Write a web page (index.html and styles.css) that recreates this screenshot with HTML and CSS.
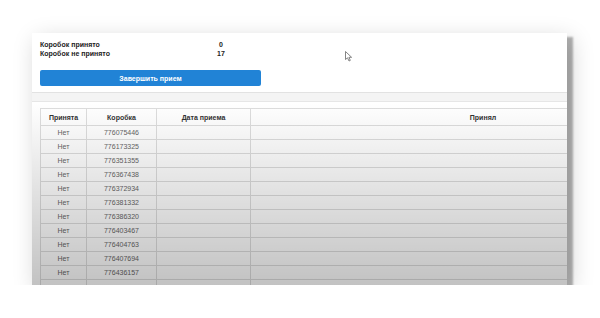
FILE: index.html
```html
<!DOCTYPE html>
<html lang="ru">
<head>
  <meta charset="UTF-8">
  <meta name="viewport" content="width=device-width, initial-scale=1.0">
  <title>Приемка коробок</title>
  <link rel="stylesheet" href="styles.css">
</head>
<body>
  <div class="window">
    <div class="card summary">
      <div class="stat">
        <span class="stat-label">Коробок принято</span>
        <span class="stat-value">0</span>
      </div>
      <div class="stat">
        <span class="stat-label">Коробок не принято</span>
        <span class="stat-value">17</span>
      </div>
      <button class="primary-button">Завершить прием</button>
    </div>
    <div class="card list">
      <table class="boxes">
        <thead>
          <tr>
            <th class="col-accepted">Принята</th>
            <th class="col-box">Коробка</th>
            <th class="col-date">Дата приема</th>
            <th>Принял</th>
          </tr>
        </thead>
        <tbody>
          <tr><td>Нет</td><td>776075446</td><td></td><td></td></tr>
          <tr><td>Нет</td><td>776173325</td><td></td><td></td></tr>
          <tr><td>Нет</td><td>776351355</td><td></td><td></td></tr>
          <tr><td>Нет</td><td>776367438</td><td></td><td></td></tr>
          <tr><td>Нет</td><td>776372934</td><td></td><td></td></tr>
          <tr><td>Нет</td><td>776381332</td><td></td><td></td></tr>
          <tr><td>Нет</td><td>776386320</td><td></td><td></td></tr>
          <tr><td>Нет</td><td>776403467</td><td></td><td></td></tr>
          <tr><td>Нет</td><td>776404763</td><td></td><td></td></tr>
          <tr><td>Нет</td><td>776407694</td><td></td><td></td></tr>
          <tr><td>Нет</td><td>776436157</td><td></td><td></td></tr>
          <tr class="partial"><td></td><td></td><td></td><td></td></tr>
        </tbody>
      </table>
    </div>
    <div class="fade"></div>
  </div>

  <!-- mouse pointer -->
  <svg class="cursor" width="8" height="11" viewBox="0 0 8 11">
    <path d="M0.5 0.5 L0.5 8.5 L2.5 6.8 L4 10 L5.3 9.4 L3.9 6.3 L6.6 6.3 Z" fill="#fff" stroke="#666" stroke-width="0.8"/>
  </svg>
</body>
</html>
```

FILE: styles.css
```css
body {
  margin: 0;
  background-color: #fff;
  font-family: 'Liberation Sans', Arial, sans-serif;
  font-size: 7px;
  color: #333;
}
.window {
  position: relative;
  width: 535px;
  height: 252px;
  margin: 33px 0 0 32px;
  background-color: #f4f4f4;
  overflow: hidden;
  box-shadow: 6px 4px 2px rgba(0, 0, 0, 0.3), 4px 6px 22px rgba(0, 0, 0, 0.18);
}
.card {
  background-color: #fff;
  border-bottom: 1px solid #e2e2e2;
}
.summary {
  padding: 7px 8px 6px;
  height: 46px;
}
.stat {
  display: grid;
  grid-template-columns: 170px 22px;
  height: 9px;
  line-height: 9px;
  font-weight: bold;
  color: #222;
}
.stat-value {
  text-align: center;
}
.primary-button {
  display: block;
  width: 221px;
  height: 16px;
  margin-top: 12px;
  padding: 0;
  border: none;
  border-radius: 2px;
  background-color: #2183d6;
  color: #fff;
  font-family: 'Liberation Sans', Arial, sans-serif;
  font-size: 7px;
  font-weight: bold;
}
.list {
  margin-top: 8px;
  padding: 6px 0 0 8px;
  height: 200px;
  border-top: 1px solid #e6e6e6;
}
.boxes {
  width: 676px;
  border-collapse: collapse;
  table-layout: fixed;
  color: #666;
}
.boxes th,
.boxes td {
  border: 1px solid #ddd;
  text-align: center;
  padding: 0;
}
.boxes th {
  height: 16px;
  color: #333;
  font-weight: bold;
}
.boxes td {
  height: 13px;
}
.col-accepted { width: 45px; }
.col-box { width: 69px; }
.col-date { width: 93px; }
.fade {
  position: absolute;
  left: 0;
  right: 0;
  top: 70px;
  bottom: 0;
  background: linear-gradient(to bottom, rgba(0, 0, 0, 0), rgba(0, 0, 0, 0.24));
  pointer-events: none;
}
.cursor {
  position: absolute;
  left: 345px;
  top: 51px;
}
```
